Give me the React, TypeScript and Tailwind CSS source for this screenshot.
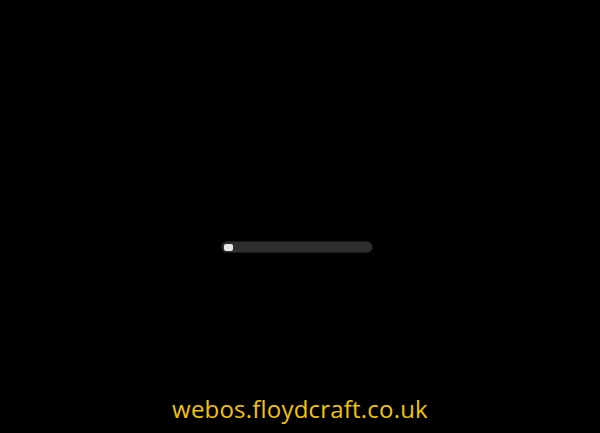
export default function App() {
  return (
    <main className="w-full h-screen bg-black flex flex-col items-center overflow-hidden">
      <div className="mt-[241px] ml-[-6px] w-[152px] h-[12px] rounded-full bg-[#2e2e30] border border-[#1a1a1a] flex items-center px-[2px]">
        <div className="w-[9px] h-[7px] rounded-[2px] bg-[#e8e8e8]" />
      </div>
      <p
        className="mt-auto mb-[9px] text-[24px] leading-[30px] tracking-[0.2px] text-[#f2c500]"
        style={{ fontFamily: '"Open Sans", "DejaVu Sans", sans-serif' }}
      >
        webos.floydcraft.co.uk
      </p>
    </main>
  );
}
